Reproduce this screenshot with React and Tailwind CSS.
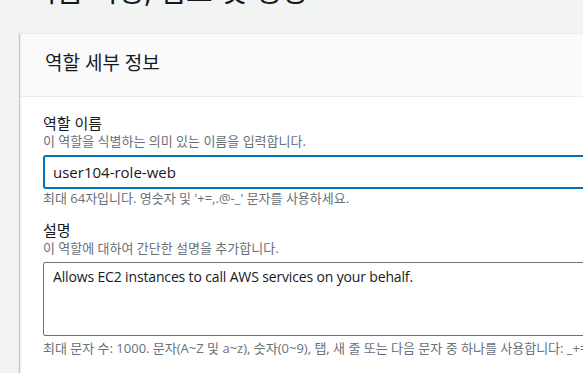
import React from 'react';

const font = { fontFamily: '"Open Sans", "Noto Sans CJK KR", sans-serif' };

const Field = ({ label, description, hint, children }) => (
  <div>
    <div className="text-[15px] leading-[20px] text-[#16191f]">{label}</div>
    <div className="text-[13px] leading-[16px] text-[#687078]">{description}</div>
    {children}
    <div className="text-[13px] leading-[16px] text-[#687078] whitespace-nowrap">{hint}</div>
  </div>
);

const App = () => {
  return (
    <div
      className="w-[583px] h-[373px] overflow-hidden bg-[#f2f3f3] pl-[20px]"
      style={font}
    >
      <h1 className="-mt-[27px] ml-[10px] text-[29px] leading-[36px] text-[#16191f] whitespace-nowrap">
        이름 지정, 검토 및 생성
      </h1>

      <div className="mt-[24px] w-[640px] bg-white border-l border-t border-[#eaeded] shadow-[0_1px_1px_0_rgba(0,28,36,0.3),-1px_1px_1px_0_rgba(0,28,36,0.15)]">
        <div className="h-[63px] bg-[#fafafa] border-b border-[#eaeded] flex items-center px-[24px] pb-[5px]">
          <h2 className="text-[19px] leading-[22px] text-[#16191f]">역할 세부 정보</h2>
        </div>

        <div className="pt-[16px] pl-[22px] pb-[20px]">
          <Field
            label="역할 이름"
            description="이 역할을 식별하는 의미 있는 이름을 입력합니다."
            hint="최대 64자입니다. 영숫자 및 '+=,.@-_' 문자를 사용하세요."
          >
            <div className="mt-[6px] mb-[1px] h-[34px] border-2 border-[#0073bb] rounded-[3px] flex items-center pl-[8px] text-[15px] text-[#16191f]">
              user104-role-web
            </div>
          </Field>

          <div className="mt-[14px]">
            <Field
              label="설명"
              description="이 역할에 대하여 간단한 설명을 추가합니다."
              hint="최대 문자 수: 1000. 문자(A~Z 및 a~z), 숫자(0~9), 탭, 새 줄 또는 다음 문자 중 하나를 사용합니다: _+=,.@-"
            >
              <div className="mt-[6px] mb-[4px] h-[74px] border border-[#687078] rounded-[2px] pl-[9px] pt-[4px] text-[14px] leading-[20px] text-[#16191f] tracking-[-0.15px]">
                Allows EC2 instances to call AWS services on your behalf.
              </div>
            </Field>
          </div>
        </div>
      </div>
    </div>
  );
};

export default App;
